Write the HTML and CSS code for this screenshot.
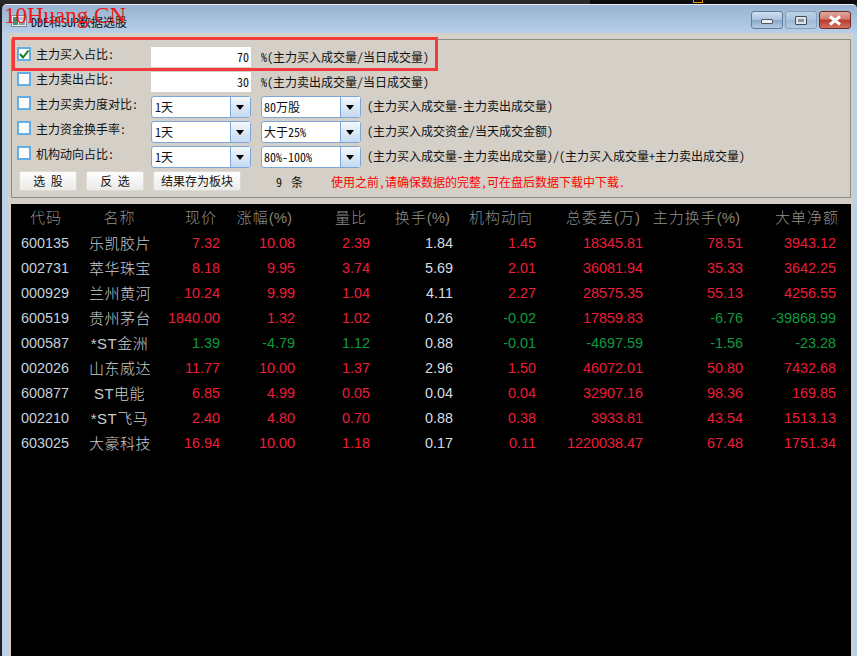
FILE: index.html
```html
<!DOCTYPE html>
<html lang="zh-CN">
<head>
<meta charset="utf-8">
<title>DDE和SUP数据选股</title>
<link rel="stylesheet" href="styles.css">
</head>
<body>
<div class="strip"><div class="strip-left"></div><div class="strip-right"><span class="strip-mark"></span></div></div>
<div class="window">
  <header class="titlebar">
    <svg class="app-icon" width="16" height="12" viewBox="0 0 16 12"><rect x="0.5" y="0.5" width="15" height="11" fill="#e8ecef" stroke="#7d8890"/><rect x="2" y="2" width="5" height="8" fill="#3f8f6f"/><rect x="8" y="2" width="6" height="3" fill="#b8c4cc"/><rect x="8" y="7" width="6" height="3" fill="#8d9aa5"/></svg>
    <span class="title-text">DDE和SUP数据选股</span>
    <div class="win-buttons">
      <div class="win-btn"><span class="glyph-min"></span></div>
      <div class="win-btn win-btn-dim"><span class="glyph-max"></span></div>
      <div class="win-btn win-btn-close"><svg width="14" height="11" viewBox="0 0 14 11"><path d="M2 1.5 L12 9.5 M12 1.5 L2 9.5" stroke="#fff" stroke-width="3" fill="none"/></svg></div>
    </div>
  </header>
  <main class="client">
    <section class="group">
      <div class="row">
        <span class="check"><svg width="12" height="12" viewBox="0 0 12 12"><path d="M2 6 L5 9.5 L10.5 2.5" stroke="#0f7a1e" stroke-width="2" fill="none"/></svg></span>
        <span class="label">主力买入占比:</span>
        <span class="field">70</span>
        <span class="note">%(主力买入成交量/当日成交量)</span>
      </div>
      <div class="row">
        <span class="check"></span>
        <span class="label">主力卖出占比:</span>
        <span class="field">30</span>
        <span class="note">%(主力卖出成交量/当日成交量)</span>
      </div>
      <div class="row row-combo">
        <span class="check"></span>
        <span class="label">主力买卖力度对比:</span>
        <div class="combo"><span class="combo-text">1天</span><span class="combo-arrow"></span></div>
        <div class="combo"><span class="combo-text combo-text-tight">80万股</span><span class="combo-arrow"></span></div>
        <span class="note">(主力买入成交量-主力卖出成交量)</span>
      </div>
      <div class="row row-combo">
        <span class="check"></span>
        <span class="label">主力资金换手率:</span>
        <div class="combo"><span class="combo-text">1天</span><span class="combo-arrow"></span></div>
        <div class="combo"><span class="combo-text combo-text-tight">大于25%</span><span class="combo-arrow"></span></div>
        <span class="note">(主力买入成交资金/当天成交金额)</span>
      </div>
      <div class="row row-combo">
        <span class="check"></span>
        <span class="label">机构动向占比:</span>
        <div class="combo"><span class="combo-text">1天</span><span class="combo-arrow"></span></div>
        <div class="combo"><span class="combo-text combo-text-tight">80%-100%</span><span class="combo-arrow"></span></div>
        <span class="note">(主力买入成交量-主力卖出成交量)/(主力买入成交量+主力卖出成交量)</span>
      </div>
      <div class="actions">
        <button class="btn">选 股</button>
        <button class="btn">反 选</button>
        <button class="btn btn-wide">结果存为板块</button>
        <span class="count">9 条</span>
        <span class="warning">使用之前,请确保数据的完整,可在盘后数据下载中下载.</span>
      </div>
    </section>
    <section class="grid-panel">
      <table class="quotes">
        <colgroup>
          <col class="c-code"><col class="c-name"><col class="c-price"><col class="c-75"><col class="c-75"><col class="c-83"><col class="c-83"><col class="c-total"><col class="c-main"><col class="c-big">
        </colgroup>
        <thead>
          <tr><th class="th-code">代码</th><th class="th-name">名称</th><th>现价</th><th>涨幅<span class="unit">(%)</span></th><th>量比</th><th>换手<span class="unit">(%)</span></th><th>机构动向</th><th>总委差<span class="unit">(</span>万<span class="unit">)</span></th><th>主力换手<span class="unit">(%)</span></th><th class="th-last">大单净额</th></tr>
        </thead>
        <tbody>
          <tr><td class="code">600135</td><td class="name">乐凯胶片</td><td class="up">7.32</td><td class="up">10.08</td><td class="up">2.39</td><td class="flat">1.84</td><td class="up">1.45</td><td class="up">18345.81</td><td class="up">78.51</td><td class="up last">3943.12</td></tr>
          <tr><td class="code">002731</td><td class="name">萃华珠宝</td><td class="up">8.18</td><td class="up">9.95</td><td class="up">3.74</td><td class="flat">5.69</td><td class="up">2.01</td><td class="up">36081.94</td><td class="up">35.33</td><td class="up last">3642.25</td></tr>
          <tr><td class="code">000929</td><td class="name">兰州黄河</td><td class="up">10.24</td><td class="up">9.99</td><td class="up">1.04</td><td class="flat">4.11</td><td class="up">2.27</td><td class="up">28575.35</td><td class="up">55.13</td><td class="up last">4256.55</td></tr>
          <tr><td class="code">600519</td><td class="name">贵州茅台</td><td class="up">1840.00</td><td class="up">1.32</td><td class="up">1.02</td><td class="flat">0.26</td><td class="down">-0.02</td><td class="up">17859.83</td><td class="down">-6.76</td><td class="down last">-39868.99</td></tr>
          <tr><td class="code">000587</td><td class="name">*ST金洲</td><td class="down">1.39</td><td class="down">-4.79</td><td class="down">1.12</td><td class="flat">0.88</td><td class="down">-0.01</td><td class="down">-4697.59</td><td class="down">-1.56</td><td class="down last">-23.28</td></tr>
          <tr><td class="code">002026</td><td class="name">山东威达</td><td class="up">11.77</td><td class="up">10.00</td><td class="up">1.37</td><td class="flat">2.96</td><td class="up">1.50</td><td class="up">46072.01</td><td class="up">50.80</td><td class="up last">7432.68</td></tr>
          <tr><td class="code">600877</td><td class="name">ST电能</td><td class="up">6.85</td><td class="up">4.99</td><td class="up">0.05</td><td class="flat">0.04</td><td class="up">0.04</td><td class="up">32907.16</td><td class="up">98.36</td><td class="up last">169.85</td></tr>
          <tr><td class="code">002210</td><td class="name">*ST飞马</td><td class="up">2.40</td><td class="up">4.80</td><td class="up">0.70</td><td class="flat">0.88</td><td class="up">0.38</td><td class="up">3933.81</td><td class="up">43.54</td><td class="up last">1513.13</td></tr>
          <tr><td class="code">603025</td><td class="name">大豪科技</td><td class="up">16.94</td><td class="up">10.00</td><td class="up">1.18</td><td class="flat">0.17</td><td class="up">0.11</td><td class="up">1220038.47</td><td class="up">67.48</td><td class="up last">1751.34</td></tr>
        </tbody>
      </table>
    </section>
  </main>
</div>
<div class="highlight"></div>
<div class="watermark">10Huang.CN</div>
</body>
</html>
```
FILE: styles.css
```css
* { box-sizing: border-box; }
html, body { height: 100%; }
body {
  margin: 0;
  height: 656px;
  overflow: hidden;
  background: #1f1f1f;
  font-family: "Noto Sans CJK SC", "Liberation Sans", sans-serif;
  font-size: 12px;
  color: #111;
  display: flex;
  flex-direction: column;
}
.strip { height: 4px; display: flex; flex: none; }
.strip-left { width: 590px; background: #2a2a2a; }
.strip-right { flex: 1; background: #0c0c0c; padding-left: 103px; }
.strip-mark { display: block; width: 10px; height: 3px; border: 1px solid #f29400; border-top: 0; }

.window {
  flex: 1;
  margin-left: 2px;
  display: flex;
  flex-direction: column;
  border-top: 1px solid #e9eff5;
  border-radius: 5px 5px 0 0;
  background: linear-gradient(#98b3cf 0, #b9d1ea 30px, #b9d1ea 100%);
  min-height: 0;
}
.titlebar { height: 28px; flex: none; display: flex; align-items: center; padding: 0 6px 0 9px; }
.app-icon { margin-top: 4px; }
.title-text { margin-left: 4px; margin-top: 5px; font-feature-settings: "hwid"; }
.win-buttons { margin-left: auto; display: flex; gap: 2px; margin-top: 2px; }
.win-btn {
  width: 32px; height: 18px;
  border: 1px solid #5f7c9c;
  border-radius: 3px;
  background: linear-gradient(#cfe0f0 0, #a9c3de 50%, #8aa8c6 51%, #b5cce2 100%);
  display: flex; align-items: center; justify-content: center;
}
.win-btn-dim { border-color: #86a0bc; background: linear-gradient(#bcd2e7 0, #a9c4de 50%, #9db9d6 51%, #b3cce4 100%); }
.win-btn-close { border-color: #6e2a2a; background: linear-gradient(#e0a79c 0, #cf7a6b 45%, #b53a28 50%, #d2705f 100%); }
.glyph-min { width: 12px; height: 5px; background: #f0f0ee; border: 1px solid #4a5a6c; border-radius: 1px; margin-top: 2px; }
.glyph-max { width: 12px; height: 9px; border: 1px solid #3f4d5e; border-radius: 1px; background: #dfe3e6; display: flex; align-items: center; justify-content: center; }
.glyph-max::after { content: ""; width: 6px; height: 3px; background: #8795a3; }

.client {
  flex: 1;
  margin: 0 4px 0 6px;
  background: #d4d0c8;
  padding: 6px 2px 0 3px;
  display: flex;
  flex-direction: column;
  gap: 6px;
  min-height: 0;
}
.group {
  height: 159px;
  flex: none;
  border: 1px solid #8c8a85;
  padding: 5px 0 0 5px;
  display: flex;
  flex-direction: column;
}
.row { height: 25px; display: flex; align-items: flex-start; flex: none; }
.check {
  width: 14px; height: 14px;
  margin-top: 2px;
  flex: none;
  border: 2px solid #62ade6;
  background: #fff;
  display: flex; align-items: center; justify-content: center;
}
.check svg { flex: none; }
.row-combo .check { margin-top: 1px; }
.label { width: 120px; padding-left: 5px; line-height: 16px; margin-top: 1px; font-feature-settings: "hwid"; flex: none; white-space: nowrap; }
.field {
  width: 100px; height: 20px;
  margin-top: 2px;
  background: #fff;
  text-align: right;
  padding-right: 2px;
  line-height: 20px;
  font-feature-settings: "hwid";
}
.note { margin-left: 10px; margin-top: 4px; line-height: 16px; white-space: nowrap; font-feature-settings: "hwid"; }
.row-combo .note { margin-left: 6px; margin-top: 3px; }
.combo {
  width: 100px; height: 22px;
  margin-top: 1px;
  margin-right: 10px;
  background: #fff;
  border: 1px solid #7da6d8;
  border-radius: 3px;
  display: flex;
  flex: none;
}
.row-combo .combo + .combo { margin-right: 0; }
.combo-text { flex: 1; padding-left: 3px; line-height: 20px; font-feature-settings: "hwid"; white-space: nowrap; }
.combo-text-tight { padding-left: 2px; }
.combo-arrow {
  width: 20px;
  border-left: 1px solid #7da6d8;
  background: linear-gradient(#f4f8fc, #c4d9f0);
  position: relative;
}
.combo-arrow::after {
  content: "";
  position: absolute;
  left: 5px; top: 8px;
  border-style: solid;
  border-width: 5px 4px 0;
  border-color: #000 transparent transparent;
}
.actions { display: flex; align-items: center; height: 24px; padding: 0 0 2px 2px; flex: none; }
.btn {
  width: 58px; height: 20px;
  margin-right: 9px;
  padding: 0;
  border: 1px solid #dedbd5;
  border-radius: 2px;
  background: linear-gradient(#fdfdfd, #ecebe8);
  font: inherit;
  line-height: 16px;
  color: #111;
  word-spacing: 3px;
}
.btn-wide { width: 88px; margin-right: 0; }
.count { margin-left: 35px; width: 55px; flex: none; word-spacing: 3px; font-feature-settings: "hwid"; }
.warning { color: #f00; white-space: nowrap; font-feature-settings: "hwid"; }

.grid-panel { flex: 1; background: #000; min-height: 0; overflow: hidden; }
.quotes { border-collapse: collapse; table-layout: fixed; width: 828px; font-family: "Liberation Sans", "Noto Sans CJK SC", sans-serif; font-size: 14.4px; }
.c-code { width: 78px; }
.c-name { width: 61px; }
.c-price { width: 70px; }
.c-75 { width: 75px; }
.c-83 { width: 83px; }
.c-total { width: 107px; }
.c-main { width: 100px; }
.c-big { width: 96px; }
.quotes th {
  height: 26px;
  padding: 0 3px 2px 0;
  text-align: right;
  font-weight: 300;
  font-size: 15px;
  letter-spacing: 1px;
  color: #8f8f8f;
  white-space: nowrap;
}
.quotes .unit { letter-spacing: 0; color: #87806f; }
.quotes .th-code { text-align: left; padding: 0 0 2px 19px; }
.quotes .th-name { text-align: center; padding: 0 0 2px; }
.quotes .th-last { padding-right: 0; }
.quotes td { height: 25px; padding: 0; text-align: right; white-space: nowrap; }
.quotes .code { text-align: left; padding-left: 10px; color: #c3d2df; }
.quotes .name { text-align: center; font-size: 15px; font-weight: 300; letter-spacing: 0.5px; color: #c8cdd0; }
.quotes .last { padding-right: 3px; }
.up { color: #ee1c3a; }
.down { color: #119a40; }
.flat { color: #d5dce2; }

.highlight { position: absolute; left: 12px; top: 37px; width: 426px; height: 34px; border: 3px solid #f43a3a; pointer-events: none; }
.watermark { position: absolute; left: 4px; top: 1px; font-family: "Liberation Serif", serif; font-size: 23px; line-height: 30px; color: #f01515; white-space: nowrap; }
```
